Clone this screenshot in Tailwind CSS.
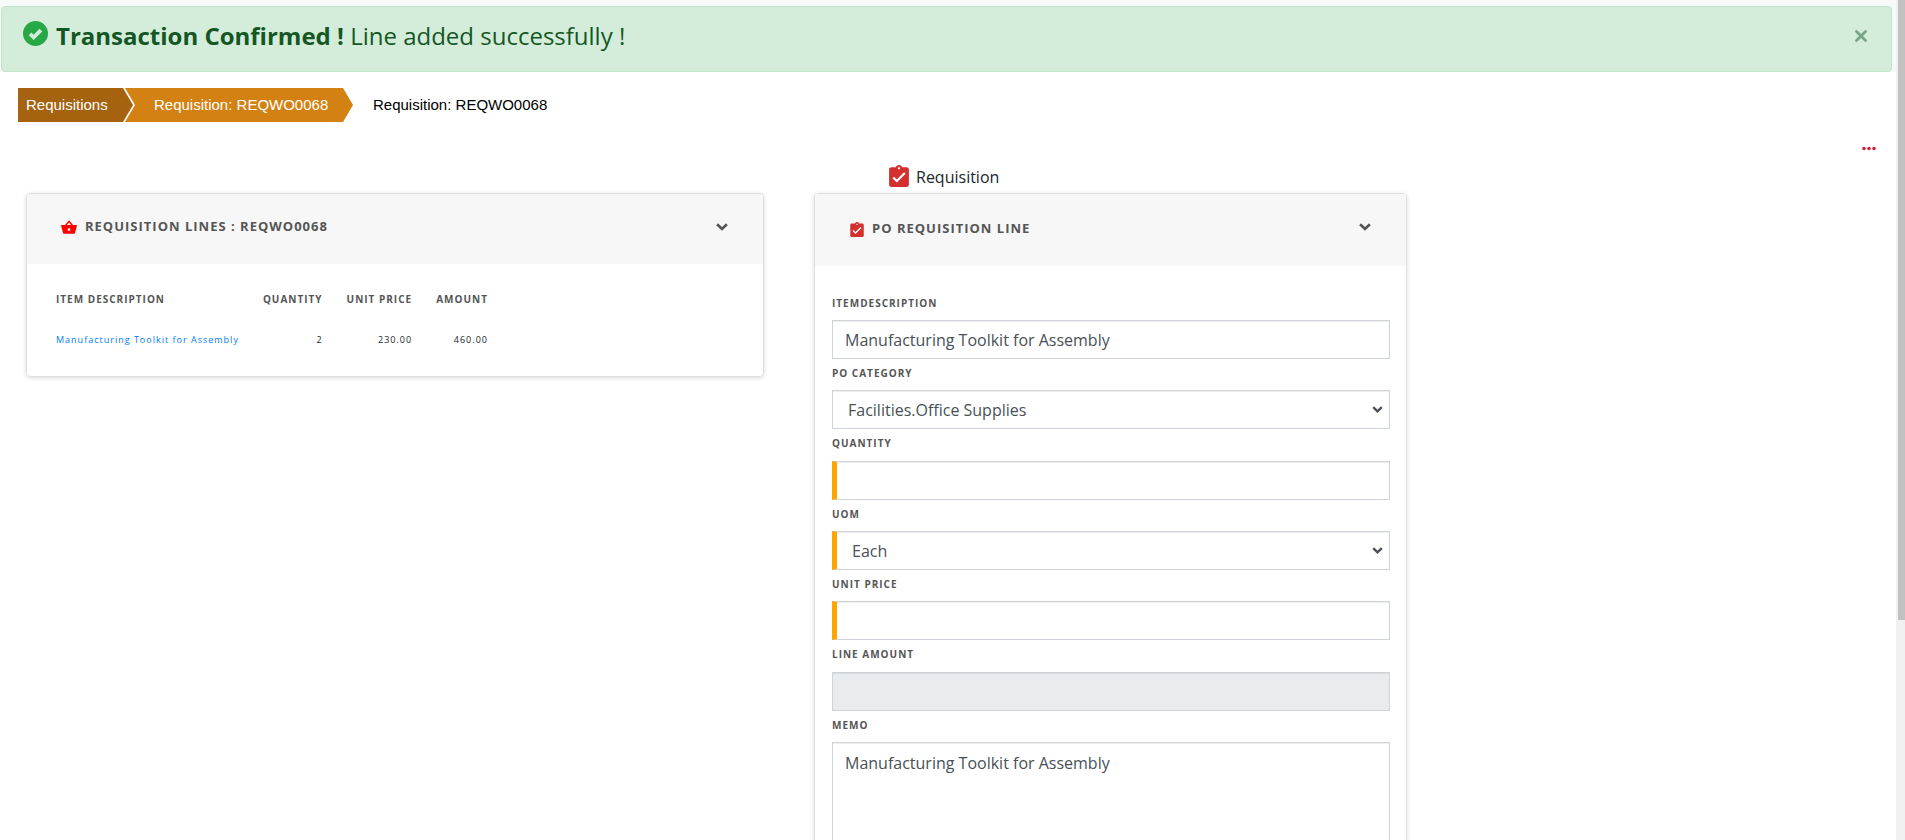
<!DOCTYPE html>
<html lang="en">
<head>
<meta charset="utf-8">
<title>Requisition: REQWO0068</title>
<script src="https://cdn.jsdelivr.net/npm/@tailwindcss/browser@4"></script>
</head>
<body class="flex h-screen overflow-hidden bg-white font-['Open_Sans','Noto_Sans',sans-serif] text-base text-[#212529]">
<svg class="hidden">
  <symbol id="chevron" viewBox="0 0 12 8"><path d="M1.100 1.300 6 6l4.900-4.700" fill="none" stroke="currentColor" stroke-width="2.700"/></symbol>
  <symbol id="clipboard" viewBox="3 1 18 20"><path fill="currentColor" fill-rule="evenodd" d="M19 3h-4.180C14.400 1.840 13.300 1 12 1s-2.400.840-2.820 2H5c-1.100 0-2 .900-2 2v14c0 1.100.900 2 2 2h14c1.100 0 2-.900 2-2V5c0-1.100-.900-2-2-2zm-7 0c.550 0 1 .450 1 1s-.450 1-1 1-1-.450-1-1 .450-1 1-1zm-2 14-4-4 1.410-1.410L10 14.170l6.590-6.590L18 9l-8 8z"/></symbol>
</svg>
<main class="min-w-0 flex-1">
  <div class="bg-[#f8f9fa] pt-[6px]">
    <div role="alert" class="ml-px mr-1 flex h-[66px] items-start rounded border border-[#c3e6cb] bg-[#d4edda] pl-[21px] pr-6 text-[#155724]">
      <svg class="mt-[14px] size-[25px]" viewBox="0 0 24 24" aria-hidden="true"><circle cx="12" cy="12" r="12" fill="#28a745"/><path d="m6.800 12.300 3.400 3.400 7-7" fill="none" stroke="#d4edda" stroke-width="3.600"/></svg>
      <p class="ml-2 mt-[11px] text-2xl leading-[36px]"><strong class="font-bold">Transaction Confirmed !</strong> Line added successfully !</p>
      <button aria-label="Close" class="ml-auto mt-[23px] text-[#78a583]"><svg class="size-[12px]" viewBox="0 0 12 12"><path d="m1.500 1.500 9 9m0-9-9 9" stroke="currentColor" stroke-width="2.800" stroke-linecap="round"/></svg></button>
    </div>
  </div>
  <nav aria-label="Breadcrumb" class="mt-4 flex h-[34px] items-center pl-[18px] font-['Liberation_Sans',sans-serif] text-[15px] text-white">
    <a href="#" class="flex h-full w-[116px] items-center bg-[#a5620f] pl-2 [clip-path:polygon(0_0,105px_0,115px_50%,105px_100%,0_100%)]">Requisitions</a>
    <a href="#" class="-ml-[32px] flex h-full w-[251px] items-center bg-[#d38112] pl-[52px] [clip-path:polygon(23px_0,241px_0,251px_50%,241px_100%,23px_100%,33px_50%)]">Requisition: REQWO0068</a>
    <span class="ml-5 text-black">Requisition: REQWO0068</span>
  </nav>
  <div class="flex justify-end pr-5 pt-[24px]">
    <button aria-label="More actions" class="text-[#dc3545]"><svg class="h-[5px] w-[14px]" viewBox="0 0 14 5" fill="#d51f35"><circle cx="2" cy="2.500" r="1.800"/><circle cx="7" cy="2.500" r="1.800"/><circle cx="12" cy="2.500" r="1.800"/></svg></button>
  </div>
  <div class="mt-[9px] grid grid-cols-12">
    <div class="col-span-5 px-[26px] pt-[33px]">
      <section class="overflow-hidden rounded border border-[#dfdfe1] shadow-[0_1px_4px_rgba(0,0,0,0.150)]">
        <header class="flex h-[70px] items-center bg-[#f7f7f7] pb-1 pl-[34px] pr-[35px] text-[#555]">
          <svg class="h-[14px] w-4" viewBox="0 0 16 14" aria-hidden="true"><path fill="red" fill-rule="evenodd" d="M8 .3 12 5h3.200c.600 0 .800.400.700.800L14 13c-.150.600-.500.800-1 .800H3c-.500 0-.850-.200-1-.800L.1 5.800C0 5.400.200 5 .8 5H4zM8 2.400 5.900 5h4.200zM8 8.200a1.400 1.400 0 1 0 0 2.800 1.400 1.400 0 0 0 0-2.800z"/></svg>
          <h2 class="ml-2 text-[13px] font-bold tracking-[1px]">REQUISITION LINES : REQWO0068</h2>
          <button aria-label="Collapse" class="ml-auto"><svg class="h-2 w-3"><use href="#chevron"/></svg></button>
        </header>
        <div class="px-[17px] pb-4 pt-[14px]">
          <table class="text-[9px] tracking-[1px]">
            <thead class="text-[10px] text-[#555]"><tr class="h-[42px]">
              <th class="px-3 text-left font-bold">ITEM DESCRIPTION</th><th class="px-3 text-right font-bold">QUANTITY</th><th class="px-3 text-right font-bold">UNIT PRICE</th><th class="px-3 text-right font-bold">AMOUNT</th>
            </tr></thead>
            <tbody><tr class="h-[40px]">
              <td class="px-3"><a href="#" class="text-[#007bff]">Manufacturing Toolkit for Assembly</a></td><td class="px-3 text-right">2</td><td class="px-3 text-right">230.00</td><td class="px-3 text-right">460.00</td>
            </tr></tbody>
          </table>
        </div>
      </section>
    </div>
    <div class="col-span-4 pl-6 pr-[15px]">
      <div class="flex h-[33px] items-end pb-[6px] pl-[75px]">
        <svg class="h-[22px] w-5 text-[#d32f2f]" aria-hidden="true"><use href="#clipboard"/></svg>
        <h1 class="ml-[7px] text-base leading-[20px]">Requisition</h1>
      </div>
      <section class="overflow-hidden rounded border border-[#dfdfe4] shadow-[0_1px_4px_rgba(0,0,0,0.150)]">
        <header class="flex h-[72px] items-center bg-[#f7f7f7] pb-[2px] pl-[35px] pr-[35px] text-[#555]">
          <svg class="h-[15px] w-[14px] text-[#d32f2f]" aria-hidden="true"><use href="#clipboard"/></svg>
          <h2 class="ml-2 text-[13px] font-bold tracking-[1px]">PO REQUISITION LINE</h2>
          <button aria-label="Collapse" class="mb-1 ml-auto"><svg class="h-2 w-3"><use href="#chevron"/></svg></button>
        </header>
        <form class="pb-6 pl-[17px] pr-4 pt-[23px] text-[#495057]">
          <label for="desc" class="block h-[31px] pt-[6px] text-[10px] font-bold leading-[16px] tracking-[1px] text-[#555]">ITEMDESCRIPTION</label>
          <input id="desc" type="text" value="Manufacturing Toolkit for Assembly" class="block h-[39px] w-full border border-[#ced4da] bg-white px-3 shadow-[inset_0_1px_1px_rgba(0,0,0,0.075)]">
          <label for="cat" class="block h-[31px] pt-[6px] text-[10px] font-bold leading-[16px] tracking-[1px] text-[#555]">PO CATEGORY</label>
          <div class="relative">
            <select id="cat" class="block h-[39px] w-full appearance-none border border-[#ced4da] bg-white pl-[15px] shadow-[inset_0_1px_1px_rgba(0,0,0,0.075)]"><option>Facilities.Office Supplies</option></select>
            <svg class="pointer-events-none absolute right-[7px] top-4 h-[7px] w-[11px]" aria-hidden="true"><use href="#chevron"/></svg>
          </div>
          <label for="qty" class="block h-[32px] pt-[6px] text-[10px] font-bold leading-[16px] tracking-[1px] text-[#555]">QUANTITY</label>
          <input id="qty" type="text" class="block h-[39px] w-full border border-l-[5px] border-[#ced4da] border-l-[#ffa500] bg-white px-3 shadow-[inset_0_1px_1px_rgba(0,0,0,0.075)]">
          <label for="uom" class="block h-[31px] pt-[6px] text-[10px] font-bold leading-[16px] tracking-[1px] text-[#555]">UOM</label>
          <div class="relative">
            <select id="uom" class="block h-[39px] w-full appearance-none border border-l-[5px] border-[#ced4da] border-l-[#ffa500] bg-white pl-[15px] shadow-[inset_0_1px_1px_rgba(0,0,0,0.075)]"><option>Each</option></select>
            <svg class="pointer-events-none absolute right-[7px] top-4 h-[7px] w-[11px]" aria-hidden="true"><use href="#chevron"/></svg>
          </div>
          <label for="price" class="block h-[31px] pt-[6px] text-[10px] font-bold leading-[16px] tracking-[1px] text-[#555]">UNIT PRICE</label>
          <input id="price" type="text" class="block h-[39px] w-full border border-l-[5px] border-[#ced4da] border-l-[#ffa500] bg-white px-3 shadow-[inset_0_1px_1px_rgba(0,0,0,0.075)]">
          <label for="amount" class="block h-[32px] pt-[6px] text-[10px] font-bold leading-[16px] tracking-[1px] text-[#555]">LINE AMOUNT</label>
          <input id="amount" type="text" readonly class="block h-[39px] w-full border border-[#ced4da] bg-[#e9ecef] px-3 shadow-[inset_0_1px_1px_rgba(0,0,0,0.075)]">
          <label for="memo" class="block h-[31px] pt-[6px] text-[10px] font-bold leading-[16px] tracking-[1px] text-[#555]">MEMO</label>
          <textarea id="memo" rows="5" class="block w-full resize-none border border-[#ced4da] bg-white px-3 py-2 leading-6 shadow-[inset_0_1px_1px_rgba(0,0,0,0.075)]">Manufacturing Toolkit for Assembly</textarea>
        </form>
      </section>
    </div>
  </div>
</main>
<div class="w-[9px] shrink-0 bg-[#f0f0f0] pl-[2px]" aria-hidden="true"><div class="h-[620px] bg-[#c1c1c1]"></div></div>
</body>
</html>
